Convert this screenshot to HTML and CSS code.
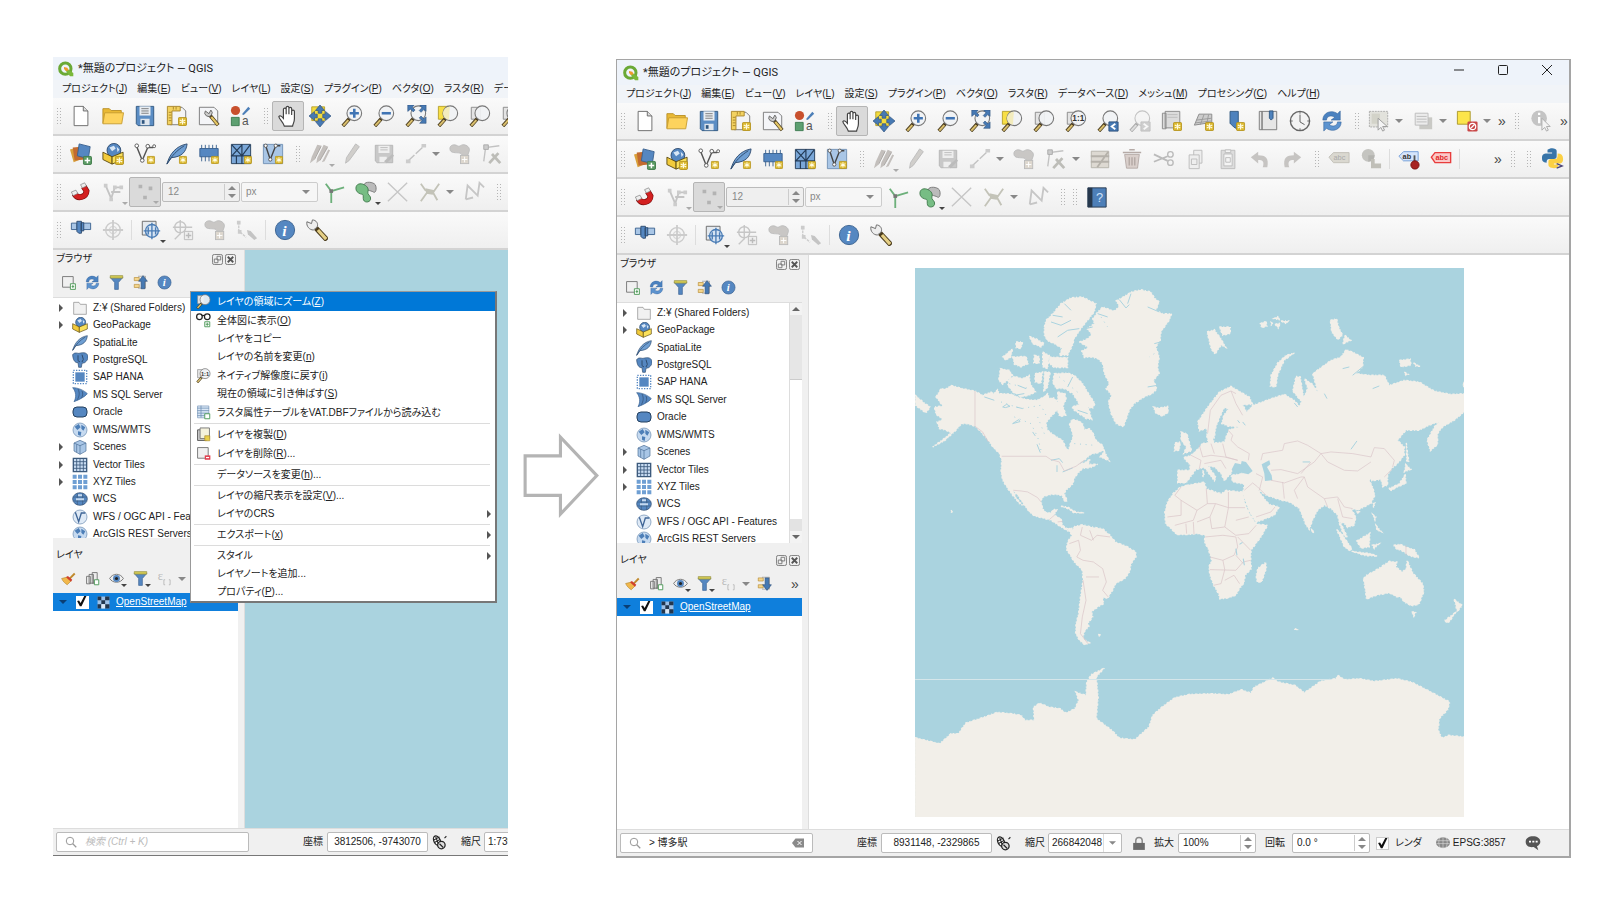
FILE: index.html
```html
<!DOCTYPE html>
<html lang="ja">

<head>
    <meta charset="UTF-8">
    <title>QGIS - レイヤの領域にズーム</title>
    <link rel="stylesheet" href="styles.css">
</head>

<body>

    <!-- icon set, all on a 24 grid -->
    <svg class="sprite">
        <symbol id="star" viewBox="0 0 10 10">
            <rect x=".5" y=".5" width="9" height="9" rx="1.5" fill="#dcb92f" stroke="#b3921d" />
            <path d="M5 1.8v6.4M2 3.4l6 3.2M8 3.4L2 6.6" stroke="#fffbe0" stroke-width="1.3" />
        </symbol>
        <symbol id="plus" viewBox="0 0 10 10">
            <rect x=".5" y=".5" width="9" height="9" rx="1.5" fill="#5a9a63" stroke="#3c7a47" />
            <path d="M5 2v6M2 5h6" stroke="#fff" stroke-width="1.6" />
        </symbol>
        <symbol id="lens" viewBox="0 0 24 24">
            <path d="M10 14l-8 9" stroke="#4a3b1c" stroke-width="4" />
            <path d="M8 16.5l-5.500 6" stroke="#d9bf6e" stroke-width="2.400" />
            <circle cx="14.500" cy="9" r="8" fill="#f0f2f4" fill-opacity=".93" stroke="#777" stroke-width="1.200" />
        </symbol>
        <symbol id="logo" viewBox="0 0 24 24">
            <circle cx="11" cy="11.500" r="8.500" fill="none" stroke="#6aa936" stroke-width="4.500" />
            <path d="M14 12l9 6v5h-5l-7-9z" fill="#7ab83a" />
            <path d="M9 9l5 1 2 4-4 1-3-3z" fill="#ee9a2c" />
        </symbol>
        <symbol id="new" viewBox="0 0 24 24">
            <path d="M4.500 1.500h10l5 5v16h-15z" fill="#fff" stroke="#666" />
            <path d="M14.500 1.500v5h5" fill="#ddd" stroke="#666" />
        </symbol>
        <symbol id="open" viewBox="0 0 24 24">
            <path d="M1 20V4h7l2 2h11v3" fill="#e9b935" stroke="#b98f25" />
            <path d="M1 20.500L3 8.500h20.500L21.500 20.500z" fill="#fdd35d" stroke="#c79c30" />
        </symbol>
        <symbol id="save" viewBox="0 0 24 24">
            <path d="M2.500 1.500h19v21h-17l-2-2z" fill="#5b8dc4" stroke="#2f567f" />
            <path d="M6 1.500h12v10H6z" fill="#e8edf2" />
            <path d="M8 4h8M8 6.500h8M8 9h8" stroke="#777" />
            <path d="M7 15h10v7H7z" fill="#dfe6ee" />
            <path d="M8.500 16.500h3v4h-3z" fill="#2f567f" />
        </symbol>
        <symbol id="layout" viewBox="0 0 24 24">
            <path d="M4.500 2.500h13l4 4v15h-17z" fill="#f4f4f4" stroke="#777" />
            <path d="M1.500 1.500h14v5h-9v15h-5z" fill="#f3d260" stroke="#a8862a" />
            <path d="M3 8h3M3 11h3M3 14h3M3 17h3M8 2v3M11 2v3" stroke="#a8862a" />
            <use href="#star" x="13" y="13" width="10" height="10" />
        </symbol>
        <symbol id="wrenchpage" viewBox="0 0 24 24">
            <path d="M1.500 2.500h16l4 4v15h-20z" fill="#f4f5f8" stroke="#777" />
            <path d="M12 10l10 12" stroke="#4a3b1c" stroke-width="4" />
            <path d="M14.500 13l7 8.500" stroke="#e5c766" stroke-width="2.400" />
            <path d="M8 6.500a4 4 0 1 0 6-1l-2 4z" fill="#ccc" stroke="#666" />
        </symbol>
        <symbol id="style" viewBox="0 0 24 24">
            <circle cx="6" cy="6" r="5" fill="#c8502d" />
            <path d="M1.500 13.500h8.500v9H1.500z" fill="#5da071" stroke="#3b7a4f" />
            <path d="M13 10l7-8 2 2-7 7z" fill="#4d7fb8" />
            <text x="13" y="22" font-size="13" fill="#555" font-family="Liberation Sans, sans-serif">a</text>
        </symbol>
        <symbol id="hand" viewBox="0 0 24 24">
            <path d="M8 23C7 19 2 15 2 12.500c1-1.500 3-.5 5 2V5c0-2 3-2 3 0v5-7c0-2 3-2 3 0v7-6c0-2 3-2 3 0v7-4c0-2 3-2 3 0v8c0 4-1.500 5-2 8z" fill="#fff" stroke="#444" stroke-width="1.300" />
        </symbol>
        <symbol id="pan" viewBox="0 0 24 24">
            <path d="M3 2h14v15H3z" fill="#f4dc3c" stroke="#b5a02c" />
            <path d="M12 0l5 6h-3v3h-4V6H7zM12 24l-5-6h3v-3h4v3h3zM0 12l6-5v3h3v4H6v3zM24 12l-6 5v-3h-3v-4h3V7z" fill="#4679b3" stroke="#2c4f7a" stroke-width=".7" />
        </symbol>
        <symbol id="zoomin" viewBox="0 0 24 24">
            <use href="#lens" />
            <path d="M14.500 4v10M9.500 9h10" stroke="#3f74b4" stroke-width="2.800" />
        </symbol>
        <symbol id="zoomout" viewBox="0 0 24 24">
            <use href="#lens" />
            <path d="M9.500 9h10" stroke="#3f74b4" stroke-width="2.800" />
        </symbol>
        <symbol id="zoomfull" viewBox="0 0 24 24">
            <use href="#lens" />
            <path d="M3 0h7L8 2.500l3 3-2 2-3-3L3 7zM23 0v7l-2.500-2-3 3-2-2 3-3L16 0zM23 20h-7l2.500-3-3-3 2-2 3 3 2.500-2z" fill="#4679b3" stroke="#2c4f7a" stroke-width=".6" />
        </symbol>
        <symbol id="zoomsel" viewBox="0 0 24 24">
            <path d="M1.500 1.500h11v14h-11z" fill="#f8df45" stroke="#b5a02c" />
            <use href="#lens" />
            <path d="M14 2a7 7 0 0 0-1 14z" fill="#f3ecbd" />
        </symbol>
        <symbol id="zoomlayer" viewBox="0 0 24 24">
            <path d="M2.500 2.500h10v13h-10z" fill="#e4e4e4" stroke="#888" />
            <use href="#lens" />
        </symbol>
        <symbol id="zoomnative" viewBox="0 0 24 24">
            <path d="M2.500 2.500h10v13h-10z" fill="#e4e4e4" stroke="#888" />
            <use href="#lens" />
            <text x="8" y="12" font-size="9" font-weight="700" fill="#333" font-family="Liberation Sans, sans-serif">1:1</text>
        </symbol>
        <symbol id="zoomlast" viewBox="0 0 24 24">
            <use href="#lens" />
            <path d="M13 13h10v10H13z" fill="#4679b3" stroke="#2c4f7a" />
            <path d="M20 15l-4 3 4 3" fill="none" stroke="#fff" stroke-width="2" />
        </symbol>
        <symbol id="zoomnext" viewBox="0 0 24 24">
            <use href="#lens" />
            <path d="M13 13h10v10H13z" fill="#999" stroke="#777" />
            <path d="M16 15l4 3-4 3" fill="none" stroke="#fff" stroke-width="2" />
        </symbol>
        <symbol id="mapview" viewBox="0 0 24 24">
            <path d="M1.500 3.500h4v17h-4zM4.500 1.500h16v18h-16z" fill="#dcdcdc" stroke="#888" />
            <path d="M7 5h11M7 8h11" stroke="#bbb" />
            <use href="#star" x="13" y="13" width="10" height="10" />
        </symbol>
        <symbol id="view3d" viewBox="0 0 24 24">
            <path d="M1.500 16.500l5-12h14v9z" fill="#ccc" stroke="#888" />
            <path d="M4 11l16-2M3 14l17-2M12 5l-4 11M17 5l-2 10" stroke="#999" />
            <use href="#star" x="13" y="13" width="10" height="10" />
        </symbol>
        <symbol id="bookmark" viewBox="0 0 24 24">
            <path d="M5.500 1.500h9v20l-5-3-4-4z" fill="#4e82bd" stroke="#2f567f" />
            <use href="#star" x="12" y="13" width="10" height="10" />
        </symbol>
        <symbol id="bookmarks" viewBox="0 0 24 24">
            <path d="M2.500 1.500h3v20h-3zM5.500 1.500h16v20h-16z" fill="#e6e6e6" stroke="#777" />
            <path d="M13.500 1h4v8l-2 2-2-2z" fill="#4e82bd" stroke="#2f567f" />
        </symbol>
        <symbol id="clock" viewBox="0 0 24 24">
            <circle cx="12" cy="12" r="10.500" fill="#f3f3f3" stroke="#666" stroke-width="1.500" />
            <path d="M12 5v8l5 3M12 2v2M12 20v2M2 12h2M20 12h2" stroke="#555" fill="none" />
        </symbol>
        <symbol id="refresh" viewBox="0 0 24 24">
            <path d="M2 11C2 3 11-1 18 4l3-3v10H11l4-3c-4-3-9-1-9 3z" fill="#4b82c0" stroke="#2f5f99" stroke-width=".6" />
            <path d="M22 13c0 8-9 12-16 7l-3 3V13h10l-4 3c4 3 9 1 9-3z" fill="#5c93cf" stroke="#2f5f99" stroke-width=".6" />
        </symbol>
        <symbol id="select" viewBox="0 0 24 24">
            <path d="M1.500 1.500h20v17h-20z" fill="#e2e2dc" stroke="#aaa" stroke-dasharray="2 1" />
            <path d="M4 4h9v11H4z" fill="#d3d3c9" />
            <path d="M11 9v13l3-3 2 4 2-1-2-4h5z" fill="#f4f4f4" stroke="#999" />
        </symbol>
        <symbol id="form" viewBox="0 0 24 24">
            <path d="M8 8h14v13H8z" fill="#c9c9c5" />
            <path d="M3.500 3.500h14v13h-14z" fill="#ececec" stroke="#bbb" />
            <path d="M5 7h11M5 10h11M5 13h11" stroke="#bbb" />
        </symbol>
        <symbol id="deselect" viewBox="0 0 24 24">
            <path d="M1.500 1.500h14v14h-14z" fill="#fce54a" stroke="#a8962a" />
            <rect x="12.500" y="12.500" width="11" height="11" rx="1.500" fill="#c94747" />
            <circle cx="18" cy="18" r="3.500" fill="none" stroke="#fff" stroke-width="1.300" />
            <path d="M15.500 20.500l5-5" stroke="#fff" stroke-width="1.300" />
        </symbol>
        <symbol id="identify" viewBox="0 0 24 24">
            <circle cx="10" cy="9" r="8.500" fill="#c4c4c4" />
            <path d="M10 3v2.500M10 7.500v7" stroke="#fff" stroke-width="2.500" />
            <path d="M13 9v13l3-3 2 4 2-1-2-4h4z" fill="#f4f4f4" stroke="#aaa" />
        </symbol>

        <symbol id="source" viewBox="0 0 24 24">
            <path d="M0 7l11-3 3 13-10 4z" fill="#d9a03a" />
            <path d="M3 5l11-1 2 14-11 1z" fill="#c26b30" />
            <path d="M10 1l12 3-2 13-12-3z" fill="#5587c1" stroke="#3a618f" />
            <use href="#plus" x="14" y="14" width="10" height="10" />
        </symbol>
        <symbol id="gpkg" viewBox="0 0 24 24">
            <circle cx="13" cy="8" r="7.500" fill="#5587c1" stroke="#2f4c6e" />
            <path d="M8 5l5-2 2 3-4 3zM16 4l3 3-2 3z" fill="#d8e6f5" />
            <path d="M1 10l10 5v8L1 18z" fill="#f2cb3b" stroke="#5c4a10" />
            <path d="M11 15l12-5v8l-12 5z" fill="#fae15c" stroke="#5c4a10" />
        </symbol>
        <symbol id="gpkgnew" viewBox="0 0 24 24">
            <use href="#gpkg" />
            <use href="#star" x="14" y="14" width="10" height="10" />
        </symbol>
        <symbol id="vnew" viewBox="0 0 24 24">
            <path d="M3 4l6 15 6-14h6" fill="none" stroke="#555" stroke-width="1.600" />
            <circle cx="3" cy="3" r="2" fill="#fff" stroke="#555" />
            <circle cx="15" cy="3.500" r="2" fill="#fff" stroke="#555" />
            <circle cx="22" cy="3.500" r="1.600" fill="#fff" stroke="#555" />
            <circle cx="9" cy="19" r="2" fill="#fff" stroke="#555" />
            <use href="#star" x="14" y="14" width="9" height="9" />
        </symbol>
        <symbol id="feather" viewBox="0 0 24 24">
            <path d="M1 23C4 12 11 3 23 1c-1 9-6 14-17 15z" fill="#6f9fd3" stroke="#2f4c6e" />
            <path d="M1 23C6 14 12 8 20 3" fill="none" stroke="#2f4c6e" />
        </symbol>
        <symbol id="feathernew" viewBox="0 0 24 24">
            <use href="#feather" />
            <use href="#star" x="14" y="14" width="9" height="9" />
        </symbol>
        <symbol id="memory" viewBox="0 0 24 24">
            <path d="M4 2v18M8 2v18M12 2v18M16 2v18M20 2v14" stroke="#3a618f" />
            <path d="M2 6h20v9H2z" fill="#5587c1" stroke="#3a618f" />
            <use href="#star" x="14" y="14" width="9" height="9" />
        </symbol>
        <symbol id="mesh" viewBox="0 0 24 24">
            <path d="M1.500 1.500h21v21h-21z" fill="#7aa7d8" stroke="#243c58" />
            <path d="M13 1v22M1 14h22M2 2l11 12M13 2L2 14M22 2l-9 12M7 14v9" stroke="#243c58" fill="none" stroke-width="1.300" />
            <use href="#star" x="15" y="14" width="9" height="9" />
        </symbol>
        <symbol id="virtual" viewBox="0 0 24 24">
            <path d="M1.500 1.500h21v21h-21z" fill="#a9c6e6" stroke="#7191b5" />
            <path d="M4 3l5 15 6-15h5" fill="none" stroke="#444" stroke-width="1.500" />
            <circle cx="4" cy="3" r="1.800" fill="#fff" stroke="#555" />
            <circle cx="15" cy="3" r="1.800" fill="#fff" stroke="#555" />
            <circle cx="9" cy="18" r="1.800" fill="#fff" stroke="#555" />
            <use href="#star" x="14" y="14" width="9" height="9" />
        </symbol>
        <symbol id="pencils" viewBox="0 0 24 24">
            <path d="M1 22l2-7L9 2l5 1-9 16zM8 22l1-6 7-14 5 2-9 15zM14 21l7-14 2 1-6 12z" fill="#c3bfbc" />
            <path d="M6 18L13 4M12 19l8-14" stroke="#aaa6a3" />
        </symbol>
        <symbol id="pencil" viewBox="0 0 24 24">
            <path d="M5 22l1-6L16 1l4 3-11 15z" fill="#d0cecb" stroke="#bbb" />
        </symbol>
        <symbol id="saveedit" viewBox="0 0 24 24">
            <path d="M2.500 2.500h19v19h-17l-2-2z" fill="#c8c8c8" stroke="#b5b5b5" />
            <path d="M6 3h12v8H6zM7 15h8v6H7z" fill="#eee" />
            <path d="M8 5h8M8 7.500h8" stroke="#bbb" />
            <path d="M12 20l9-8 2 2-8 8z" fill="#bbb" />
        </symbol>
        <symbol id="line" viewBox="0 0 24 24">
            <path d="M3 20L20 4" stroke="#c2c2c2" stroke-width="1.500" stroke-dasharray="10 2" />
            <path d="M1 18h5v4H1zM18 1h5v4h-5z" fill="#ccc" />
        </symbol>
        <symbol id="polygon" viewBox="0 0 24 24">
            <path d="M1 6C1 2 6 1 9 3s4-2 8-1 6 4 5 7-2 4-1 7-5 5-7 2 2-6-2-7-11 1-11-5z" fill="#c9c7c5" stroke="#bbb" />
            <rect x="12.500" y="13.500" width="9" height="9" fill="#ddd7ce" stroke="#bbb" />
            <path d="M17 15v6M14 18h6" stroke="#fff" />
        </symbol>
        <symbol id="vertex" viewBox="0 0 24 24">
            <path d="M3 20L5 5l15-2" fill="none" stroke="#c2c2c2" stroke-width="1.500" />
            <path d="M3 2h5v5H3z" fill="#ccc" stroke="#aaa" />
            <path d="M9 22L19 11M12 12l9 10" stroke="#bdbdb8" stroke-width="3" />
        </symbol>
        <symbol id="multiedit" viewBox="0 0 24 24">
            <path d="M2.500 3.500h19v18h-19z" fill="#ddd9d2" stroke="#b5b1aa" />
            <path d="M2 9h20M2 15h20M9 21L21 4" stroke="#b5b1aa" stroke-width="2" />
        </symbol>
        <symbol id="trash" viewBox="0 0 24 24">
            <path d="M4 7h16l-2 15H6z" fill="#d9cfcb" stroke="#b5aaa6" />
            <path d="M2 5h20M9 2h6M9 10v9M12 10v9M15 10v9" stroke="#b5aaa6" stroke-width="1.600" />
        </symbol>
        <symbol id="cut" viewBox="0 0 24 24">
            <path d="M1 7l15 7M1 15l15-6" stroke="#bbb" stroke-width="2" />
            <circle cx="19" cy="7" r="3" fill="none" stroke="#bbb" stroke-width="1.500" />
            <circle cx="19" cy="16" r="3" fill="none" stroke="#bbb" stroke-width="1.500" />
        </symbol>
        <symbol id="copy" viewBox="0 0 24 24">
            <path d="M9.500 2.500h9v14h-9z" fill="#eee" stroke="#bbb" />
            <path d="M4.500 7.500h11v15h-11z" fill="#eee" stroke="#bbb" />
            <path d="M7 12h6v6H7z" fill="none" stroke="#bbb" />
        </symbol>
        <symbol id="paste" viewBox="0 0 24 24">
            <path d="M4.500 2.500h15v20h-15z" fill="#ddd" stroke="#bbb" />
            <path d="M7.500 6.500h9v13h-9zM9 2h6v3H9zM9.500 10.500h5v5h-5z" fill="#f4f4f4" stroke="#bbb" />
        </symbol>
        <symbol id="undo" viewBox="0 0 24 24">
            <path d="M2 10l8-6v4c8 0 12 3 10 13h-5c2-6 0-8-5-8v4z" fill="#c6c4c2" />
        </symbol>
        <symbol id="redo" viewBox="0 0 24 24">
            <path d="M22 10l-8-6v4C6 8 2 11 4 21h5c-2-6 0-8 5-8v4z" fill="#c6c4c2" />
        </symbol>
        <symbol id="label" viewBox="0 0 24 24">
            <path d="M1 10l5-5h17v11H6z" fill="#dad8d0" stroke="#c2c0b8" />
            <text x="6" y="13" font-size="8" fill="#aaa" font-family="Liberation Sans, sans-serif">abc</text>
        </symbol>
        <symbol id="diagram" viewBox="0 0 24 24">
            <circle cx="9" cy="8" r="7" fill="#c4c4c0" />
            <path d="M9 8h7a7 7 0 0 1-7 7z" fill="#b4b4b0" />
            <path d="M12 12h4v10h-4zM16 17h7v5h-7z" fill="#c0bfb8" />
        </symbol>
        <symbol id="pinlabel" viewBox="0 0 24 24">
            <path d="M1 9l5-5h16v10H6z" fill="#d5e4fb" stroke="#6f9bd8" />
            <text x="5" y="12" font-size="8" font-weight="700" fill="#333" font-family="Liberation Sans, sans-serif">ab</text>
            <path d="M18 8v8" stroke="#555" stroke-width="2" />
            <circle cx="18.500" cy="18.500" r="4.500" fill="#a82424" stroke="#7a1515" />
        </symbol>
        <symbol id="redlabel" viewBox="0 0 24 24">
            <path d="M1.500 10l4-5h17v11h-17z" fill="#fbc9c9" stroke="#e83d3d" stroke-width="1.500" />
            <text x="6" y="13" font-size="8" font-weight="700" fill="#e02a2a" font-family="Liberation Sans, sans-serif">abc</text>
        </symbol>
        <symbol id="python" viewBox="0 0 24 24">
            <path d="M6 2c3-3 10-2 10 1v6c0 2-1 3-3 3H8c-2 0-3 1-3 4-4 0-5-2-5-5 0-4 2-5 5-5h6V5H6z" fill="#3774a8" />
            <path d="M17 6c4 0 6 2 6 6s-2 5-5 5h-5v1h5c0 3-2 4-5 4s-6-1-6-4v-3c0-2 1-3 3-3h4c3 0 3-2 3-6z" fill="#fbd044" />
            <path d="M16 17l6 2.500-6 2.500" fill="none" stroke="#4b4478" stroke-width="1.500" />
        </symbol>

        <symbol id="magnet" viewBox="0 0 24 24">
            <path d="M5 14c3 6 13 4 13-3l-3-5" fill="none" stroke="#7d1010" stroke-width="6.500" />
            <path d="M5 14c3 6 13 4 13-3l-3-5" fill="none" stroke="#d32020" stroke-width="5" />
            <path d="M1.500 12l5-2 2 3.500-5 2.500zM11.500 4l4.500-2 2 3.500-4.500 2z" fill="#eee" stroke="#777" stroke-width=".7" />
        </symbol>
        <symbol id="snapv" viewBox="0 0 24 24">
            <path d="M4 5l6 14 4-12h8M10 12h10" fill="none" stroke="#c4c4c4" stroke-width="2" />
            <path d="M2 3h4v4H2zM8 18h4v4H8zM12 5h4v4h-4zM19 5h4v4h-4z" fill="#ccc" />
        </symbol>
        <symbol id="dots" viewBox="0 0 24 24">
            <path d="M5 4h4v4H5zM16 6h4v4h-4zM10 16h4v4h-4z" fill="#b3b3b3" />
        </symbol>
        <symbol id="topo" viewBox="0 0 24 24">
            <path d="M3 3l6 8 14-4M9 11v13" stroke="#6db07b" stroke-width="2" fill="none" />
            <path d="M7 9h4v4H7z" fill="#777" />
        </symbol>
        <symbol id="overlap" viewBox="0 0 24 24">
            <path d="M10 4c1-4 10-3 12 0s1 10-2 8-9-1-10-8z" fill="#bbb" stroke="#777" />
            <path d="M1 8c0-5 5-6 9-4s5 5 4 8 4 4 3 8-8 4-8-1 0-4-3-5-5-3-5-6z" fill="#77bd84" stroke="#3f7a4c" />
        </symbol>
        <symbol id="cross" viewBox="0 0 24 24">
            <path d="M1 2l21 20M22 2L1 22" stroke="#c6c6c6" stroke-width="1.500" />
        </symbol>
        <symbol id="trace" viewBox="0 0 24 24">
            <path d="M2 3l5 7 8 3 7-10M2 22l8-11M15 12l5 9" stroke="#c3c3b8" stroke-width="2" fill="none" />
            <path d="M7 8l10 2-2 5-7-1z" fill="#c3c3b8" />
        </symbol>
        <symbol id="selfsnap" viewBox="0 0 24 24">
            <path d="M3 20l2-15 11 11 2-14 5 5M3 20l8-2" stroke="#c6c6c6" stroke-width="2" fill="none" />
        </symbol>
        <symbol id="help" viewBox="0 0 24 24">
            <path d="M2 2h20v21H2z" fill="#4d7fb8" stroke="#26384d" />
            <path d="M2 2h5v21H2z" fill="#26384d" />
            <text x="11" y="17" font-size="14" fill="#cfe2f8" font-family="Liberation Sans, sans-serif">?</text>
        </symbol>

        <symbol id="digit" viewBox="0 0 24 24">
            <path d="M1.500 4.500h6v7h-6zM14 4.500h8.500v7H14z" fill="#a9c6e6" stroke="#3a618f" />
            <path d="M7.500 2.500h5v13h-3l-2-2zM12 4h3v9h-3z" fill="#5587c1" stroke="#2f4c6e" />
        </symbol>
        <symbol id="target" viewBox="0 0 24 24">
            <circle cx="12" cy="12" r="8" fill="none" stroke="#ccc" stroke-width="1.500" />
            <circle cx="12" cy="12" r="4" fill="none" stroke="#ccc" />
            <path d="M12 1v22M1 12h22" stroke="#ccc" stroke-width="2" />
        </symbol>
        <symbol id="targetblue" viewBox="0 0 24 24">
            <path d="M2.500 2.500h15v15h-15z" fill="#e4e9ee" stroke="#666" />
            <circle cx="13" cy="13" r="7" fill="#d6e4f3" stroke="#4a7cb5" stroke-width="1.500" />
            <path d="M13 4v18M4 13h18M9 9v8M17 9v8" stroke="#4a7cb5" stroke-width="1.500" />
        </symbol>
        <symbol id="addpart" viewBox="0 0 24 24">
            <circle cx="9" cy="9" r="6" fill="none" stroke="#c6c6c6" stroke-width="1.500" />
            <path d="M9 1v16M1 9h21M3 22l6-6" stroke="#c6c6c6" stroke-width="1.500" />
            <path d="M13.500 13.500h9v9h-9z" fill="#eee" stroke="#bbb" />
            <path d="M18 15v6M15 18h6" stroke="#bbb" stroke-width="1.500" />
        </symbol>
        <symbol id="move" viewBox="0 0 24 24">
            <path d="M3 3v10l8 7" stroke="#ccc" stroke-width="1.500" stroke-dasharray="3 1" fill="none" />
            <path d="M1 2h4v4H1zM2 12h4v4H2z" fill="#ccc" />
            <path d="M12 12l4 1 7 8-3 2-7-6z" fill="#c4c4c4" />
        </symbol>
        <symbol id="info" viewBox="0 0 24 24">
            <circle cx="12" cy="12" r="10.500" fill="#5587c1" stroke="#3a618f" />
            <text x="9" y="18" font-size="17" font-style="italic" font-weight="700" fill="#fff" font-family="Liberation Serif, serif">i</text>
        </symbol>
        <symbol id="wrench" viewBox="0 0 24 24">
            <path d="M11 10l12 13" stroke="#4a3b1c" stroke-width="5.500" />
            <path d="M13 12l9 10" stroke="#e5cf85" stroke-width="3.500" />
            <path d="M1 3l5 2 1-4c4 0 7 4 5 8l-4 3C4 12 0 8 1 3z" fill="#eee" stroke="#666" />
        </symbol>

        <symbol id="addbox" viewBox="0 0 24 24">
            <path d="M2.500 2.500h17v17h-17z" fill="#f0f0f0" stroke="#777" stroke-width="1.500" />
            <path d="M15 14h8v9h-8z" fill="#fff" stroke="#4f9a5a" stroke-width="1.500" />
            <path d="M19 16v5M17 18.500h4" stroke="#4f9a5a" stroke-width="1.500" />
        </symbol>
        <symbol id="filter" viewBox="0 0 24 24">
            <path d="M2 4h20l-7 8v11H9V12z" fill="#5587c1" stroke="#3a618f" />
            <path d="M2 1h20v4H2z" fill="#d3cb55" stroke="#8e8838" />
        </symbol>
        <symbol id="collapse" viewBox="0 0 24 24">
            <path d="M2 4h8v5H2zM2 15h8v5H2z" fill="#f3d58c" stroke="#b3862e" />
            <path d="M8 2h12v19H8" stroke="#888" fill="none" />
            <path d="M16 1l7 9h-4v12h-6V10H9z" fill="#4679b3" stroke="#2c4f7a" />
        </symbol>
        <symbol id="expand" viewBox="0 0 24 24">
            <path d="M2 3h8v5H2zM2 14h8v5H2z" fill="#f3d58c" stroke="#b3862e" />
            <path d="M8 2h12v19H8" stroke="#888" fill="none" />
            <path d="M16 23l7-9h-4V3h-6v11H9z" fill="#4679b3" stroke="#2c4f7a" />
        </symbol>
        <symbol id="brush" viewBox="0 0 24 24">
            <path d="M13 13L22 4" stroke="#c08a2d" stroke-width="3" />
            <path d="M1 12l8-2 7 6-6 6C7 20 3 17 1 12z" fill="#f2b84b" stroke="#b3862e" />
            <path d="M8 10l3-2 7 6-2 3z" fill="#d0402d" />
        </symbol>
        <symbol id="group" viewBox="0 0 24 24">
            <path d="M2.500 8.500h6v12h-6zM6.500 5.500h7v14h-7zM11.500 2.500h8v17h-8z" fill="#ececec" stroke="#777" stroke-width="1.500" />
            <path d="M15 14h7v8h-7z" fill="#fff" stroke="#4f9a5a" stroke-width="1.500" />
        </symbol>
        <symbol id="eye" viewBox="0 0 24 24">
            <path d="M1 12c5-9 17-9 22 0-5 8-17 8-22 0z" fill="#eee" stroke="#777" stroke-width="1.500" />
            <circle cx="12" cy="12" r="5.500" fill="#5587c1" />
            <circle cx="12" cy="12" r="2.500" fill="#222" />
        </symbol>
        <symbol id="epsilon" viewBox="0 0 24 24">
            <text x="1" y="14" font-size="20" fill="#bbb" font-family="Liberation Serif, serif">ε</text>
            <path d="M13 14h-2v8h2M19 14h2v8h-2" stroke="#bbb" fill="none" stroke-width="1.500" />
        </symbol>
        <symbol id="folder" viewBox="0 0 24 24">
            <path d="M2.500 21.500v-18h8l2 3h9v15z" fill="#f1f1f1" stroke="#888" />
        </symbol>
        <symbol id="postgres" viewBox="0 0 24 24">
            <path d="M1 4c3-4 7-2 9-2s10-3 13 2-1 10-4 12l-4 1-1 6h-4l-1-7c-5 1-8-6-8-12z" fill="#5587c1" stroke="#2f4c6e" />
            <path d="M9 5v8l3 2M15 4l2 7-2 4" stroke="#2f4c6e" fill="none" stroke-width="1.500" />
        </symbol>
        <symbol id="hana" viewBox="0 0 24 24">
            <path d="M5 5h14v14H5z" fill="#5587c1" />
            <path d="M2 2h20v20H2z" fill="none" stroke="#5587c1" stroke-width="2" stroke-dasharray="2 2" />
        </symbol>
        <symbol id="mssql" viewBox="0 0 24 24">
            <path d="M1 1c8 0 17 4 22 9-4 5-12 9-20 12 4-7 3-15-2-21z" fill="#5587c1" stroke="#3a618f" />
            <path d="M9 3c3 6 2 11-1 16M15 6c2 4 1 8-1 10" stroke="#2f4c6e" fill="none" />
        </symbol>
        <symbol id="oracle" viewBox="0 0 24 24">
            <rect x="1.500" y="4.500" width="21" height="15" rx="6" fill="#5587c1" stroke="#24405f" stroke-width="1.500" />
        </symbol>
        <symbol id="globe" viewBox="0 0 24 24">
            <circle cx="12" cy="12" r="10.500" fill="#c6daf0" stroke="#6788ae" />
            <path d="M4 7l6-4 3 5-5 4zM14 4l6 4-3 5-3-3zM9 14l5 1-1 6-4-2z" fill="#4d7fb8" />
        </symbol>
        <symbol id="cube" viewBox="0 0 24 24">
            <path d="M3 6l9-4 9 4v12l-9 5-9-5z" fill="#a9c6e6" stroke="#4a6d96" />
            <path d="M3 6l9 4 9-4M12 10v13M7 8v12" fill="none" stroke="#4a6d96" />
        </symbol>
        <symbol id="grid" viewBox="0 0 24 24">
            <path d="M2 2h20v20H2z" fill="#c8dcf2" stroke="#3d5b7d" stroke-width="2" />
            <path d="M7 2v20M12 2v20M17 2v20M2 7h20M2 12h20M2 17h20" stroke="#3d5b7d" stroke-width="1.300" />
        </symbol>
        <symbol id="xyz" viewBox="0 0 24 24">
            <path d="M1 1h6v6H1zM9 1h6v6H9zM17 1h6v6h-6zM1 9h6v6H1zM9 9h6v6H9zM17 9h6v6h-6zM1 17h6v6H1zM9 17h6v6H9zM17 17h6v6h-6z" fill="#6f9fd3" />
        </symbol>
        <symbol id="wcs" viewBox="0 0 24 24">
            <ellipse cx="12" cy="12" rx="11" ry="9.500" fill="#5587c1" stroke="#2f4c6e" />
            <path d="M2 9h20M2 15h20M8 3v18M16 3v18" stroke="#3d5b7d" />
            <path d="M9 5h6v3H9zM6 11h12v3H6z" fill="#c6daf0" />
        </symbol>
        <symbol id="wfs" viewBox="0 0 24 24">
            <circle cx="12" cy="12" r="10.500" fill="#dfeaf6" stroke="#6788ae" />
            <path d="M5 5l5 14 4-13h6" fill="none" stroke="#3f6596" stroke-width="2" />
        </symbol>
        <symbol id="raster" viewBox="0 0 24 24">
            <path d="M1 1h22v22H1z" fill="#9dc0e6" />
            <path d="M1 1h7v7H1zM15 1h8v7h-8zM8 8h7v7H8zM1 15h7v8H1zM15 15h8v8h-8z" fill="#23364d" />
            <path d="M8 15h7v8H8z" fill="#dde9f5" />
        </symbol>
        <symbol id="glasses" viewBox="0 0 24 24">
            <circle cx="5.500" cy="6" r="4.500" fill="#fff" stroke="#222" stroke-width="2" />
            <circle cx="18" cy="6" r="4.500" fill="#fff" stroke="#222" stroke-width="2" />
            <path d="M9 4h5" stroke="#222" stroke-width="2" />
            <path d="M14 14h8v8h-8z" fill="#fff" stroke="#4f9a5a" stroke-width="1.500" />
            <path d="M18 15.500v5M15.500 18h5" stroke="#4f9a5a" stroke-width="1.500" />
        </symbol>
        <symbol id="table" viewBox="0 0 24 24">
            <path d="M2.500 1.500h18v19h-18z" fill="#dbe8f6" stroke="#7191b5" />
            <path d="M2 5h19M2 9h19M2 13h19M2 17h19M8 1v19" stroke="#7191b5" stroke-width="1.300" />
            <path d="M14 14h8v8h-8z" fill="#fff" stroke="#4f9a5a" stroke-width="1.500" />
        </symbol>
        <symbol id="dup" viewBox="0 0 24 24">
            <path d="M2.500 4.500h14v17h-14z" fill="#ccc" stroke="#555" stroke-width="1.500" />
            <path d="M6.500 1.500h15v17h-15z" fill="#f5f2dc" stroke="#777" stroke-width="1.500" />
            <path d="M14 14h8v8h-8z" fill="#e9cf4a" stroke="#a8862a" />
        </symbol>
        <symbol id="remove" viewBox="0 0 24 24">
            <path d="M2.500 2.500h17v17h-17z" fill="#f0f0f0" stroke="#777" stroke-width="1.500" />
            <path d="M14 15h9v7h-9z" fill="#e03c4c" />
            <path d="M16 18.500h5" stroke="#fff" stroke-width="2" />
        </symbol>
        <symbol id="search" viewBox="0 0 24 24">
            <circle cx="10" cy="10" r="7.500" fill="none" stroke="#999" stroke-width="2" />
            <path d="M15.500 15.500l7 7" stroke="#999" stroke-width="2.500" />
        </symbol>
        <symbol id="clear" viewBox="0 0 24 24">
            <path d="M0 12l7-9h17v18H7z" fill="#8a8a8a" />
            <path d="M11 8l8 8M19 8l-8 8" stroke="#fff" stroke-width="2" />
        </symbol>
        <symbol id="mouse" viewBox="0 0 24 24">
            <ellipse cx="8" cy="9" rx="5" ry="8" fill="#fff" stroke="#222" stroke-width="2" transform="rotate(-25 8 9)" />
            <ellipse cx="15" cy="16" rx="6" ry="6" fill="#ddd" stroke="#222" stroke-width="2" />
            <path d="M6 3l4 11M3 8l9-5M4 12l9-5M12 14l6 6M20 5l3-3" stroke="#222" stroke-width="1.700" />
        </symbol>
        <symbol id="lock" viewBox="0 0 24 24">
            <path d="M6.500 12V7c0-7 11-7 11 0v5" fill="none" stroke="#888" stroke-width="2.500" />
            <path d="M2 11h20v12H2z" fill="#6a6a6a" />
        </symbol>
        <symbol id="crs" viewBox="0 0 24 24">
            <ellipse cx="12" cy="11" rx="12" ry="9" fill="#888" />
            <path d="M1 8h22M1 13h22M7 2c-3 6-3 12 0 18M17 2c3 6 3 12 0 18M12 2v20" stroke="#ddd" fill="none" />
        </symbol>
        <symbol id="bubble" viewBox="0 0 24 24">
            <path d="M12 2c6 0 11 3 11 8 0 3-2 5-5 7l2 6-7-5C6 19 1 16 1 10c0-5 5-8 11-8z" fill="#555" />
            <path d="M6 10h3M11 10h3M16 10h3" stroke="#fff" stroke-width="2.500" />
        </symbol>
        <symbol id="float" viewBox="0 0 12 12">
            <rect x=".5" y=".5" width="11" height="11" rx="2" fill="none" stroke="#777" />
            <path d="M5.500 2.500h4v4h-4zM2.500 5.500h4v4h-4z" fill="#f0f0f0" stroke="#777" />
        </symbol>
        <symbol id="close" viewBox="0 0 12 12">
            <rect x=".5" y=".5" width="11" height="11" rx="2" fill="none" stroke="#777" />
            <path d="M3 3l6 6M9 3L3 9" stroke="#555" stroke-width="2" />
        </symbol>
        <symbol id="down" viewBox="0 0 8 8">
            <path d="M0 2h8L4 6z" fill="#888" />
        </symbol>
        <symbol id="downdark" viewBox="0 0 8 8">
            <path d="M0 2h8L4 6z" fill="#0a3f75" />
        </symbol>
        <symbol id="spin" viewBox="0 0 8 16">
            <path d="M0 6h8L4 2zM0 10h8l-4 4z" fill="#888" />
        </symbol>
    </svg>

    <!-- before: context menu on the layer -->
    <section class="window before">
        <header class="titlebar">
            <svg class="logo"><use href="#logo" /></svg>
            <h1>*無題のプロジェクト — QGIS</h1>
        </header>
        <nav class="menubar">
            <button>プロジェクト(<u>J</u>)</button>
            <button>編集(<u>E</u>)</button>
            <button>ビュー(<u>V</u>)</button>
            <button>レイヤ(<u>L</u>)</button>
            <button>設定(<u>S</u>)</button>
            <button>プラグイン(<u>P</u>)</button>
            <button>ベクタ(<u>O</u>)</button>
            <button>ラスタ(<u>R</u>)</button>
            <button>データベース(<u>D</u>)</button>
        </nav>
        <div class="toolbar">
            <i class="grip"></i>
            <button class="tool"><svg><use href="#new" /></svg></button>
            <button class="tool"><svg><use href="#open" /></svg></button>
            <button class="tool"><svg><use href="#save" /></svg></button>
            <button class="tool"><svg><use href="#layout" /></svg></button>
            <button class="tool"><svg><use href="#wrenchpage" /></svg></button>
            <button class="tool"><svg><use href="#style" /></svg></button>
            <i class="grip"></i>
            <button class="tool active"><svg><use href="#hand" /></svg></button>
            <button class="tool"><svg><use href="#pan" /></svg></button>
            <button class="tool"><svg><use href="#zoomin" /></svg></button>
            <button class="tool"><svg><use href="#zoomout" /></svg></button>
            <button class="tool"><svg><use href="#zoomfull" /></svg></button>
            <button class="tool"><svg><use href="#zoomsel" /></svg></button>
            <button class="tool"><svg><use href="#zoomlayer" /></svg></button>
            <button class="tool"><svg><use href="#zoomnative" /></svg></button>
        </div>
        <div class="toolbar">
            <i class="grip"></i>
            <button class="tool"><svg><use href="#source" /></svg></button>
            <button class="tool"><svg><use href="#gpkgnew" /></svg></button>
            <button class="tool"><svg><use href="#vnew" /></svg></button>
            <button class="tool"><svg><use href="#feathernew" /></svg></button>
            <button class="tool"><svg><use href="#memory" /></svg></button>
            <button class="tool"><svg><use href="#mesh" /></svg></button>
            <button class="tool"><svg><use href="#virtual" /></svg></button>
            <i class="grip"></i>
            <button class="tool more"><svg><use href="#pencils" /></svg></button>
            <button class="tool"><svg><use href="#pencil" /></svg></button>
            <button class="tool"><svg><use href="#saveedit" /></svg></button>
            <button class="tool"><svg><use href="#line" /></svg></button>
            <button class="drop"><svg><use href="#down" /></svg></button>
            <button class="tool"><svg><use href="#polygon" /></svg></button>
            <button class="tool"><svg><use href="#vertex" /></svg></button>
        </div>
        <div class="toolbar">
            <i class="grip"></i>
            <button class="tool"><svg><use href="#magnet" /></svg></button>
            <button class="tool more"><svg><use href="#snapv" /></svg></button>
            <button class="tool active more"><svg><use href="#dots" /></svg></button>
            <span class="field tolerance"><input type="text" value="12" aria-label="許容範囲"><svg class="spin"><use href="#spin" /></svg></span>
            <span class="field unit"><select aria-label="単位"><option>px</option></select><svg class="arrow"><use href="#down" /></svg></span>
            <button class="tool"><svg><use href="#topo" /></svg></button>
            <button class="tool more dark"><svg><use href="#overlap" /></svg></button>
            <button class="tool"><svg><use href="#cross" /></svg></button>
            <button class="tool"><svg><use href="#trace" /></svg></button>
            <button class="drop"><svg><use href="#down" /></svg></button>
            <button class="tool"><svg><use href="#selfsnap" /></svg></button>
            <i class="grip"></i>
        </div>
        <div class="toolbar">
            <i class="grip"></i>
            <button class="tool"><svg><use href="#digit" /></svg></button>
            <button class="tool"><svg><use href="#target" /></svg></button>
            <i class="sep"></i>
            <button class="tool more dark"><svg><use href="#targetblue" /></svg></button>
            <button class="tool"><svg><use href="#addpart" /></svg></button>
            <button class="tool"><svg><use href="#polygon" /></svg></button>
            <button class="tool"><svg><use href="#move" /></svg></button>
            <i class="sep"></i>
            <button class="tool"><svg><use href="#info" /></svg></button>
            <button class="tool"><svg><use href="#wrench" /></svg></button>
        </div>

        <div class="work">
            <aside class="docks">
                <div class="dock-title">
                    <h2>ブラウザ</h2>
                    <button><svg><use href="#float" /></svg></button>
                    <button><svg><use href="#close" /></svg></button>
                </div>
                <div class="dock-tools">
                    <button><svg><use href="#addbox" /></svg></button>
                    <button><svg><use href="#refresh" /></svg></button>
                    <button><svg><use href="#filter" /></svg></button>
                    <button><svg><use href="#collapse" /></svg></button>
                    <button><svg><use href="#info" /></svg></button>
                </div>
                <div class="browser">
                    <ul class="tree">
                        <li class="parent"><svg><use href="#folder" /></svg>Z:¥ (Shared Folders)</li>
                        <li class="parent"><svg><use href="#gpkg" /></svg>GeoPackage</li>
                        <li><svg><use href="#feather" /></svg>SpatiaLite</li>
                        <li><svg><use href="#postgres" /></svg>PostgreSQL</li>
                        <li><svg><use href="#hana" /></svg>SAP HANA</li>
                        <li><svg><use href="#mssql" /></svg>MS SQL Server</li>
                        <li><svg><use href="#oracle" /></svg>Oracle</li>
                        <li><svg><use href="#globe" /></svg>WMS/WMTS</li>
                        <li class="parent"><svg><use href="#cube" /></svg>Scenes</li>
                        <li class="parent"><svg><use href="#grid" /></svg>Vector Tiles</li>
                        <li class="parent"><svg><use href="#xyz" /></svg>XYZ Tiles</li>
                        <li><svg><use href="#wcs" /></svg>WCS</li>
                        <li><svg><use href="#wfs" /></svg>WFS / OGC API - Features</li>
                        <li><svg><use href="#globe" /></svg>ArcGIS REST Servers</li>
                    </ul>
                </div>
                <div class="dock-title second">
                    <h2>レイヤ</h2>
                </div>
                <div class="dock-tools">
                    <button><svg><use href="#brush" /></svg></button>
                    <button><svg><use href="#group" /></svg></button>
                    <button class="more dark"><svg><use href="#eye" /></svg></button>
                    <button class="more dark"><svg><use href="#filter" /></svg></button>
                    <button><svg><use href="#epsilon" /></svg></button>
                    <button class="drop"><svg><use href="#down" /></svg></button>
                </div>
                <div class="layers">
                    <div class="layer">
                        <svg class="open"><use href="#downdark" /></svg>
                        <input type="checkbox" id="osm1" checked>
                        <svg class="kind"><use href="#raster" /></svg>
                        <label for="osm1">OpenStreetMap</label>
                    </div>
                </div>
            </aside>
            <main class="canvas sea"></main>
        </div>

        <footer class="status">
            <span class="field find"><svg><use href="#search" /></svg><input type="text" placeholder="検索 (Ctrl + K)" aria-label="検索"></span>
            <label class="coord-label" for="coord1">座標</label>
            <span class="field coord"><input type="text" id="coord1" value="3812506, -9743070"></span>
            <svg class="mouse"><use href="#mouse" /></svg>
            <label for="scale1">縮尺</label>
            <span class="field scale"><select id="scale1"><option>1:73958871</option></select></span>
        </footer>

        <div class="popup">
            <button class="pic current"><svg><use href="#zoomlayer" /></svg><span>レイヤの領域にズーム(<u>Z</u>)</span></button>
            <button class="pic"><svg><use href="#glasses" /></svg><span>全体図に表示(<u>O</u>)</span></button>
            <button><span>レイヤをコピー</span></button>
            <button><span>レイヤの名前を変更(<u>n</u>)</span></button>
            <button class="pic"><svg><use href="#zoomnative" /></svg><span>ネイティブ解像度に戻す(<u>i</u>)</span></button>
            <button><span>現在の領域に引き伸ばす(<u>S</u>)</span></button>
            <button class="pic"><svg><use href="#table" /></svg><span>ラスタ属性テーブルをVAT.DBFファイルから読み込む</span></button>
            <hr>
            <button class="pic"><svg><use href="#dup" /></svg><span>レイヤを複製(<u>D</u>)</span></button>
            <button class="pic"><svg><use href="#remove" /></svg><span>レイヤを削除(<u>R</u>)...</span></button>
            <hr>
            <button><span>データソースを変更(<u>h</u>)...</span></button>
            <hr>
            <button><span>レイヤの縮尺表示を設定(<u>V</u>)...</span></button>
            <button class="sub"><span>レイヤのCRS</span></button>
            <hr>
            <button class="sub"><span>エクスポート(<u>x</u>)</span></button>
            <hr>
            <button class="sub"><span>スタイル</span></button>
            <button><span>レイヤノートを追加...</span></button>
            <button><span>プロパティ(<u>P</u>)...</span></button>
        </div>
    </section>

    <svg class="next" viewBox="0 0 76 82">
        <path d="M3 22h34V4l35 37-35 37V60H3z" fill="#fff" stroke="#b4b4b4" stroke-width="3" />
    </svg>

    <!-- after: whole world in the canvas -->
    <section class="window after">
        <header class="titlebar">
            <svg class="logo"><use href="#logo" /></svg>
            <h1>*無題のプロジェクト — QGIS</h1>
            <button class="winbtn"><svg viewBox="0 0 12 12"><path d="M1 6h10" /></svg></button>
            <button class="winbtn"><svg viewBox="0 0 12 12"><rect x="1.500" y="1.500" width="9" height="9" rx="1" /></svg></button>
            <button class="winbtn"><svg viewBox="0 0 12 12"><path d="M1 1l10 10M11 1L1 11" /></svg></button>
        </header>
        <nav class="menubar">
            <button>プロジェクト(<u>J</u>)</button>
            <button>編集(<u>E</u>)</button>
            <button>ビュー(<u>V</u>)</button>
            <button>レイヤ(<u>L</u>)</button>
            <button>設定(<u>S</u>)</button>
            <button>プラグイン(<u>P</u>)</button>
            <button>ベクタ(<u>O</u>)</button>
            <button>ラスタ(<u>R</u>)</button>
            <button>データベース(<u>D</u>)</button>
            <button>メッシュ(<u>M</u>)</button>
            <button>プロセシング(<u>C</u>)</button>
            <button>ヘルプ(<u>H</u>)</button>
        </nav>
        <div class="toolbar">
            <i class="grip"></i>
            <button class="tool"><svg><use href="#new" /></svg></button>
            <button class="tool"><svg><use href="#open" /></svg></button>
            <button class="tool"><svg><use href="#save" /></svg></button>
            <button class="tool"><svg><use href="#layout" /></svg></button>
            <button class="tool"><svg><use href="#wrenchpage" /></svg></button>
            <button class="tool"><svg><use href="#style" /></svg></button>
            <i class="grip"></i>
            <button class="tool active"><svg><use href="#hand" /></svg></button>
            <button class="tool"><svg><use href="#pan" /></svg></button>
            <button class="tool"><svg><use href="#zoomin" /></svg></button>
            <button class="tool"><svg><use href="#zoomout" /></svg></button>
            <button class="tool"><svg><use href="#zoomfull" /></svg></button>
            <button class="tool"><svg><use href="#zoomsel" /></svg></button>
            <button class="tool"><svg><use href="#zoomlayer" /></svg></button>
            <button class="tool"><svg><use href="#zoomnative" /></svg></button>
            <button class="tool"><svg><use href="#zoomlast" /></svg></button>
            <button class="tool off"><svg><use href="#zoomnext" /></svg></button>
            <button class="tool"><svg><use href="#mapview" /></svg></button>
            <button class="tool"><svg><use href="#view3d" /></svg></button>
            <button class="tool"><svg><use href="#bookmark" /></svg></button>
            <button class="tool"><svg><use href="#bookmarks" /></svg></button>
            <button class="tool"><svg><use href="#clock" /></svg></button>
            <button class="tool"><svg><use href="#refresh" /></svg></button>
            <i class="grip"></i>
            <button class="tool"><svg><use href="#select" /></svg></button>
            <button class="drop"><svg><use href="#down" /></svg></button>
            <button class="tool"><svg><use href="#form" /></svg></button>
            <button class="drop"><svg><use href="#down" /></svg></button>
            <button class="tool"><svg><use href="#deselect" /></svg></button>
            <button class="drop"><svg><use href="#down" /></svg></button>
            <span class="rest">
                <button class="ext">»</button>
                <i class="grip"></i>
                <button class="tool"><svg><use href="#identify" /></svg></button>
                <button class="ext">»</button>
            </span>
        </div>
        <div class="toolbar">
            <i class="grip"></i>
            <button class="tool"><svg><use href="#source" /></svg></button>
            <button class="tool"><svg><use href="#gpkgnew" /></svg></button>
            <button class="tool"><svg><use href="#vnew" /></svg></button>
            <button class="tool"><svg><use href="#feathernew" /></svg></button>
            <button class="tool"><svg><use href="#memory" /></svg></button>
            <button class="tool"><svg><use href="#mesh" /></svg></button>
            <button class="tool"><svg><use href="#virtual" /></svg></button>
            <i class="grip"></i>
            <button class="tool more"><svg><use href="#pencils" /></svg></button>
            <button class="tool"><svg><use href="#pencil" /></svg></button>
            <button class="tool"><svg><use href="#saveedit" /></svg></button>
            <button class="tool"><svg><use href="#line" /></svg></button>
            <button class="drop"><svg><use href="#down" /></svg></button>
            <button class="tool"><svg><use href="#polygon" /></svg></button>
            <button class="tool"><svg><use href="#vertex" /></svg></button>
            <button class="drop"><svg><use href="#down" /></svg></button>
            <button class="tool"><svg><use href="#multiedit" /></svg></button>
            <button class="tool"><svg><use href="#trash" /></svg></button>
            <button class="tool"><svg><use href="#cut" /></svg></button>
            <button class="tool"><svg><use href="#copy" /></svg></button>
            <button class="tool"><svg><use href="#paste" /></svg></button>
            <button class="tool"><svg><use href="#undo" /></svg></button>
            <button class="tool"><svg><use href="#redo" /></svg></button>
            <i class="grip"></i>
            <button class="tool"><svg><use href="#label" /></svg></button>
            <button class="tool"><svg><use href="#diagram" /></svg></button>
            <i class="sep"></i>
            <button class="tool"><svg><use href="#pinlabel" /></svg></button>
            <button class="tool"><svg><use href="#redlabel" /></svg></button>
            <i class="sep"></i>
            <span class="rest">
                <button class="ext">»</button>
                <i class="grip"></i>
                <i class="grip"></i>
                <button class="tool"><svg><use href="#python" /></svg></button>
            </span>
        </div>
        <div class="toolbar">
            <i class="grip"></i>
            <button class="tool"><svg><use href="#magnet" /></svg></button>
            <button class="tool more"><svg><use href="#snapv" /></svg></button>
            <button class="tool active more"><svg><use href="#dots" /></svg></button>
            <span class="field tolerance"><input type="text" value="12" aria-label="許容範囲"><svg class="spin"><use href="#spin" /></svg></span>
            <span class="field unit"><select aria-label="単位"><option>px</option></select><svg class="arrow"><use href="#down" /></svg></span>
            <button class="tool"><svg><use href="#topo" /></svg></button>
            <button class="tool more dark"><svg><use href="#overlap" /></svg></button>
            <button class="tool"><svg><use href="#cross" /></svg></button>
            <button class="tool"><svg><use href="#trace" /></svg></button>
            <button class="drop"><svg><use href="#down" /></svg></button>
            <button class="tool"><svg><use href="#selfsnap" /></svg></button>
            <i class="grip"></i>
            <i class="grip"></i>
            <button class="tool"><svg><use href="#help" /></svg></button>
        </div>
        <div class="toolbar">
            <i class="grip"></i>
            <button class="tool"><svg><use href="#digit" /></svg></button>
            <button class="tool"><svg><use href="#target" /></svg></button>
            <i class="sep"></i>
            <button class="tool more dark"><svg><use href="#targetblue" /></svg></button>
            <button class="tool"><svg><use href="#addpart" /></svg></button>
            <button class="tool"><svg><use href="#polygon" /></svg></button>
            <button class="tool"><svg><use href="#move" /></svg></button>
            <i class="sep"></i>
            <button class="tool"><svg><use href="#info" /></svg></button>
            <button class="tool"><svg><use href="#wrench" /></svg></button>
        </div>

        <div class="work">
            <aside class="docks">
                <div class="dock-title">
                    <h2>ブラウザ</h2>
                    <button><svg><use href="#float" /></svg></button>
                    <button><svg><use href="#close" /></svg></button>
                </div>
                <div class="dock-tools">
                    <button><svg><use href="#addbox" /></svg></button>
                    <button><svg><use href="#refresh" /></svg></button>
                    <button><svg><use href="#filter" /></svg></button>
                    <button><svg><use href="#collapse" /></svg></button>
                    <button><svg><use href="#info" /></svg></button>
                </div>
                <div class="browser">
                    <ul class="tree">
                        <li class="parent"><svg><use href="#folder" /></svg>Z:¥ (Shared Folders)</li>
                        <li class="parent"><svg><use href="#gpkg" /></svg>GeoPackage</li>
                        <li><svg><use href="#feather" /></svg>SpatiaLite</li>
                        <li><svg><use href="#postgres" /></svg>PostgreSQL</li>
                        <li><svg><use href="#hana" /></svg>SAP HANA</li>
                        <li><svg><use href="#mssql" /></svg>MS SQL Server</li>
                        <li><svg><use href="#oracle" /></svg>Oracle</li>
                        <li><svg><use href="#globe" /></svg>WMS/WMTS</li>
                        <li class="parent"><svg><use href="#cube" /></svg>Scenes</li>
                        <li class="parent"><svg><use href="#grid" /></svg>Vector Tiles</li>
                        <li class="parent"><svg><use href="#xyz" /></svg>XYZ Tiles</li>
                        <li><svg><use href="#wcs" /></svg>WCS</li>
                        <li><svg><use href="#wfs" /></svg>WFS / OGC API - Features</li>
                        <li><svg><use href="#globe" /></svg>ArcGIS REST Servers</li>
                    </ul>
                    <div class="scrollbar">
                        <i class="up"></i>
                        <i class="thumb"></i>
                        <i class="track"></i>
                        <i class="end"></i>
                        <i class="down"></i>
                    </div>
                </div>
                <div class="dock-title second">
                    <h2>レイヤ</h2>
                    <button><svg><use href="#float" /></svg></button>
                    <button><svg><use href="#close" /></svg></button>
                </div>
                <div class="dock-tools">
                    <button><svg><use href="#brush" /></svg></button>
                    <button><svg><use href="#group" /></svg></button>
                    <button class="more dark"><svg><use href="#eye" /></svg></button>
                    <button class="more dark"><svg><use href="#filter" /></svg></button>
                    <button><svg><use href="#epsilon" /></svg></button>
                    <button class="drop"><svg><use href="#down" /></svg></button>
                    <button><svg><use href="#expand" /></svg></button>
                    <button class="ext last">»</button>
                </div>
                <div class="layers">
                    <div class="layer">
                        <svg class="open"><use href="#downdark" /></svg>
                        <input type="checkbox" id="osm2" checked>
                        <svg class="kind"><use href="#raster" /></svg>
                        <label for="osm2">OpenStreetMap</label>
                    </div>
                </div>
            </aside>
            <main class="canvas">
                <svg class="world" viewBox="0 0 549 549">
                    <rect width="549" height="549" fill="#aad3df" />
                    <!-- North America, Greenland -->
                    <g class="land" transform="translate(-14 -7.700) scale(.3333)">
                        <path d="M105 410L120 385 135 386 150 375 185 385 222 392 245 405 270 395 278 400 290 388 295 400 310 400 335 402 355 412 380 418 405 420 425 412 440 400 446 415 458 412 470 425 475 400 492 400 496 418 486 436 494 462 480 470 468 450 445 475 435 490 440 510 460 525 485 540 494 560 502 570 508 550 516 530 512 510 505 495 512 478 530 480 545 490 550 508 565 505 575 515 585 540 605 555 610 570 590 578 570 582 550 600 530 612 548 608 568 596 562 612 590 612 570 622 545 625 530 640 520 655 515 672 495 690 490 700 499 722 492 725 482 705 455 702 430 708 420 720 425 745 435 757 450 757 458 747 468 748 460 765 480 775 485 795 500 808 512 802 516 808 500 812 475 797 450 780 430 775 400 767 385 755 370 735 350 705 337 692 345 712 365 735 355 730 335 705 320 685 305 660 300 635 302 600 295 580 275 560 262 540 240 515 222 498 195 490 180 492 165 510 130 542 95 560 125 538 150 518 135 510 115 505 108 485 125 478 105 462 100 440 125 437z" />
                        <path d="M535 245L560 235 572 222 558 205 580 190 575 175 590 155 605 140 640 152 655 138 645 122 670 108 690 95 720 88 750 95 760 112 775 125 765 150 785 160 812 160 805 180 780 215 778 240 765 260 775 290 770 320 775 340 758 360 768 385 755 400 730 410 700 430 685 450 675 480 667 500 645 490 630 460 622 425 632 405 615 385 625 370 610 340 605 310 590 295 570 290 550 292 542 272 562 262z" />
                        <path d="M430 200L435 180 455 160 480 130 510 112 545 110 585 130 580 155 560 180 540 205 520 235 515 255 500 285 475 285 483 265 460 250 440 242 430 225z" />
                        <path d="M445 290L500 292 500 322 460 322 445 310zM460 340L500 338 520 345 545 370 560 395 582 430 575 445 562 440 573 478 555 475 520 450 512 440 535 432 515 400 490 385 465 385 455 365z" />
                        <path d="M325 355L340 348 365 355 385 345 388 370 404 395 385 405 360 410 335 395 320 375zM298 325L325 330 335 345 320 360 305 372 293 360zM385 228L405 235 430 250 420 260 395 250zM345 245L365 245 360 265 345 262zM305 290L335 265 330 290 315 300zM335 290L375 288 382 310 360 320 340 312zM400 285L415 288 415 310 398 308zM425 275L445 285 440 325 425 320zM402 340L425 335 420 370 402 365zM430 335L448 335 440 380 428 395z" />
                        <path d="M470 395L492 400 488 425 470 420zM480 445L494 465 475 465zM597 590L610 572 625 602zM757 440L775 443 800 438 803 455 785 468 765 460zM43 405L70 428 88 440 75 458 60 448 43 435z" />
                        <path d="M480 738L500 740 525 755 550 758 520 758 500 745zM150 750L155 756 152 758z" />
                        <g class="cut">
                            <path d="M450 185l30 10 30-15M470 230l30-20 35-5M490 130l20 20M455 165l30 5M655 118l20 25 10-10M690 100l-10 30M775 155l-35-15M590 160l30 10M780 245l-20 5M770 375l-30 5M555 205l20-5" />
                            <path d="M305 440l12-8 10 6-14 4zM335 490l18-12 4 6zM408 552l10 25M450 600l25-5 10 12M468 615v20M485 635l30-12M345 440l20 5M395 515l8 12M350 375l25 10M515 350l-15 30M530 450l30 10M250 410l30 10M340 405l30-5" />
                            <path stroke-dasharray="3 14" d="M300 425l60 20 60-10 20 40M340 470l50 20 20 40 10 40M410 470l20 50M520 550l60 5M325 370l60 15M475 350l60 50M600 170l20 30M760 280l-15 10" />
                        </g>
                        <path class="border" d="M222 392V498L245 515 262 545M302 588H435L450 598 475 605 490 632 525 618 550 600M337 690L360 692 380 695 410 712 420 725M445 778L460 765M470 785L485 783" />
                    </g>
                    <!-- Europe and Asia -->
                    <g class="land" transform="translate(256 -7.700) scale(.3333)">
                        <path d="M20 630L55 630 58 615 37 592 60 585 85 562 95 548 112 548 106 522 120 515 130 548 160 545 168 522 175 508 203 500 172 498 152 490 158 465 172 448 160 442 148 468 135 500 130 533 115 530 105 505 85 512 80 485 110 440 145 395 180 378 200 390 235 410 245 432 215 434 228 455 245 435 265 428 300 415 340 402 370 420 385 437 392 425 365 392 375 348 388 350 398 410 410 385 400 355 425 372 440 395 425 340 455 318 480 300 510 290 525 268 545 275 577 292 575 320 555 340 600 345 640 345 655 375 700 360 745 365 790 392 840 402 880 400 880 455 850 480 815 500 800 520 800 553 778 572 768 540 790 500 803 485 775 495 745 510 705 510 680 540 700 560 700 585 680 610 662 625 650 645 650 675 635 680 630 658 600 662 600 650 620 645 595 660 605 680 612 705 600 730 560 750 540 745 555 770 550 795 530 802 520 790 508 785 520 810 530 832 518 825 505 790 500 765 480 745 460 735 440 750 425 780 415 808 405 795 385 745 355 725 330 720 285 705 262 690 280 715 295 732 325 740 310 765 255 787 235 755 215 700 220 672 185 665 180 645 215 640 190 620 180 640 160 662 150 640 130 620 112 618 135 650 125 655 100 622 75 628 55 655 45 668 20 668z" />
                        <path d="M30 515L48 520 62 572 38 580 46 560 30 540zM12 548L28 545 25 570 10 572zM108 215L130 208 150 235 165 262 150 255 132 282 120 265zM145 200L178 200 178 220 155 225zM268 190L285 182 288 198 272 202zM308 175L322 168 325 178zM330 182L352 182 345 190zM312 192L328 188 322 204zM300 186l6 4-5 4zM370 278L340 300 320 345 315 380 298 378 300 345 320 308 345 285z" />
                        <path d="M478 180L497 175 503 200 515 225 500 238 482 215zM522 225L540 240 515 252zM685 300L718 296 720 315 690 320zM728 308L747 318 735 318zM700 335L712 342 705 345z" />
                        <path d="M703 642L705 670 680 680 658 692 655 684 685 670zM704 612L720 627 700 635zM706 548L710 580 714 606 707 602zM878 370L882 380 876 380z" />
                        <path d="M497 808L512 820 543 865 538 872 520 860zM542 873L600 880 620 888 580 886zM557 842L597 818 595 860 570 864zM605 762L615 770 612 780zM615 795L632 815 618 810zM604 855L625 850 610 865zM668 855L688 852 710 862 730 868 745 893 718 888 690 870 678 868zM606 730L612 728 608 742zM422 808L430 815 424 818zM558 755L568 752 562 760z" />
                        <path d="M120 645L135 652 130 662zM95 630L100 640 96 650z" />
                        <path fill="#aad3df" stroke="none" d="M272 612L295 600 298 612 288 620 302 645 304 660 282 662 280 640zM182 628L192 608 210 612 212 602 225 605 245 632 232 642 205 636 188 640z" />
                        <g class="cut">
                            <path d="M540 567l18-25M605 385l20-8M515 325l20-5M460 400l8 15M215 485l8 10M200 480l6 8M395 605h22M380 440l-10-12M575 320l-30 25" />
                        </g>
                        <path class="border" d="M110 518L118 450 150 405 180 392 195 400M180 392L195 430 215 465M172 510L185 525 180 540 200 560 235 580 232 600M85 555L95 590 120 585 160 590 200 600M60 585L90 600 85 625M120 550L130 580M155 550L165 590 200 600M100 610L150 600 165 625M270 600L275 580 335 570 340 550 380 542 410 555 450 580 480 575 545 580 600 590 610 562 640 565 670 600 665 620M450 580L470 605 520 630 560 632 600 605M450 580L430 605 380 640 330 628 300 630M400 650L410 680 460 715 500 710 520 740 545 745M335 665L340 715M300 660L340 668 390 650 400 650 370 690 380 715M255 640L275 650 265 690M220 690L245 668 260 680 285 705M255 770L300 755 312 740M460 715L470 740M500 715L515 770 545 775M640 650L665 625M705 855V885M390 640L420 605" />
                    </g>
                    <!-- southern continents -->
                    <g class="land" transform="translate(-14 232.300) scale(.37 .3333)">
                        <path d="M450 85L462 90 470 78 490 73 515 80 545 85 565 105 580 125 610 138 635 155 635 170 622 190 618 215 605 235 580 250 572 270 558 295 545 292 548 310 530 322 515 335 518 350 505 370 508 378 495 395 492 415 510 428 497 434 482 420 472 400 473 370 480 340 485 290 492 240 490 210 468 185 455 160 447 148 450 125 462 105z" />
                        <path d="M771 -45L820 -55 825 -35 865 -20 879 -30 924 -25 930 10 942 40 960 70 991 75 973 110 946 150 945 180 947 205 930 225 927 248 915 265 905 285 885 293 862 296 858 280 845 255 835 225 832 200 840 180 830 145 820 125 822 105 800 100 775 103 745 103 730 85 715 70 713 35 720 5 735 -20 755 -40z" />
                        <path d="M985 187L988 202 975 245 962 245 960 225 965 203zM1250 235L1258 225 1290 205 1310 190 1320 183 1340 185 1338 200 1355 215 1365 205 1368 180 1378 205 1385 220 1410 250 1413 275 1400 312 1380 317 1360 305 1350 290 1340 290 1320 278 1285 285 1258 297 1255 270zM1380 335L1392 335 1386 348zM1495 297L1517 315 1503 335 1500 318zM1500 335L1480 368 1468 362zM533 402L540 404 536 407zM1065 385L1070 388 1064 389z" />
                        <path d="M38 712L60 718 105 730 135 700 155 700 175 668 230 648 260 636 300 640 325 645 335 660 360 660 358 620 375 608 400 620 430 625 445 638 470 625 480 600 472 575 500 585 502 545 515 522 550 503 528 530 533 590 528 655 570 690 590 713 632 718 670 680 680 645 705 620 740 592 780 582 840 580 885 583 920 568 945 578 955 560 1005 533 1020 545 1065 555 1090 577 1135 542 1175 535 1180 525 1200 538 1240 535 1280 543 1340 535 1380 545 1410 562 1450 585 1483 605 1478 628 1455 655 1452 690 1462 713 1480 705 1524 710V960H38z" />
                        <path d="M38 538H1160" fill="none" stroke="#d5e6ea" stroke-width="3" stroke-dasharray="none" />
                        <path class="border" d="M490 80L485 105 515 120 530 105 565 110M455 130L480 120 485 150 475 170 492 180 520 185 545 205 555 245 545 270 560 290M500 230L535 230M492 240L500 300 490 350 485 400 505 430M510 90L520 120" />
                        <path class="border" d="M757 -40L740 -15 757 0 757 45 720 50M757 0L800 30 790 60 740 75M825 -35L828 10 800 30M885 -25V22L850 10 828 10M885 22H930M850 10L835 50 800 65M885 22L875 80 840 85 835 50M875 80L905 105 940 100 960 75M905 60L940 50M822 110L870 105 905 110 910 140 900 165 870 180 835 170M835 208L905 210 925 185 945 180M870 180L875 208 865 250 845 255M905 165L925 190M875 240L900 225 915 250M770 70L772 100M790 65L792 102M910 110L945 150" />
                        <path class="cut" d="M915 132l8-6M905 145l3 20M925 175l3 20" />
                    </g>
                </svg>
            </main>
        </div>

        <footer class="status">
            <span class="field find"><svg><use href="#search" /></svg><input type="text" value="> 博多駅" aria-label="検索"><svg class="clear"><use href="#clear" /></svg></span>
            <label class="coord-label" for="coord2">座標</label>
            <span class="field coord"><input type="text" id="coord2" value="8931148, -2329865"></span>
            <svg class="mouse"><use href="#mouse" /></svg>
            <label for="scale2">縮尺</label>
            <span class="field scale"><select id="scale2"><option>266842048</option></select><svg class="arrow line"><use href="#down" /></svg></span>
            <svg class="lock"><use href="#lock" /></svg>
            <label for="magnify">拡大</label>
            <span class="field number"><input type="text" id="magnify" value="100%"><svg class="spin"><use href="#spin" /></svg></span>
            <label class="rot" for="rotate">回転</label>
            <span class="field number"><input type="text" id="rotate" value="0.0 °"><svg class="spin"><use href="#spin" /></svg></span>
            <input type="checkbox" id="render" checked>
            <label for="render">レンダ</label>
            <button class="epsg"><svg><use href="#crs" /></svg>EPSG:3857</button>
            <button class="msg"><svg><use href="#bubble" /></svg></button>
        </footer>
    </section>

</body>

</html>
```
FILE: styles.css
```css
* {
    box-sizing: border-box;
}

body {
    margin: 0;
    padding: 57px 29px 53px 53px;
    display: grid;
    grid-template-columns: 455fr 108fr 955fr;
    background: #fff;
    color: #222;
    font-family: "Liberation Sans", "Noto Sans CJK JP", sans-serif;
    font-size: 10px;
    line-height: 16px;
    font-feature-settings: "palt";
}

h1,
h2,
ul {
    margin: 0;
    padding: 0;
    font-size: 10px;
    font-weight: normal;
    list-style: none;
}

button,
input,
select {
    margin: 0;
    padding: 0;
    border: 0;
    background: none;
    color: inherit;
    font: inherit;
    font-feature-settings: inherit;
}

.sprite {
    display: none;
}

/* window */

.window {
    display: flex;
    flex-direction: column;
    min-width: 0;
    height: calc(100vh - 112px);
    overflow: hidden;
    background: #f0f0f0;
}

.before {
    position: relative;
    border-bottom: 1px solid #777;
}

.after {
    margin-top: 2px;
    border: 1px solid #a5a5a5;
    border-width: 1px 2px 2px 1px;
}

.titlebar {
    display: flex;
    align-items: center;
    flex: none;
    height: 23px;
    padding-left: 5px;
    background: #eef3fa;
}

.after .titlebar {
    height: 25px;
    padding-left: 6px;
}

.titlebar h1 {
    flex: 1;
    margin-left: 4px;
    font-family: Roboto, "Noto Sans CJK JP", sans-serif;
    font-size: 11px;
}

.logo {
    width: 16px;
    height: 16px;
}

.winbtn {
    width: 44px;
    height: 24px;
}

.winbtn svg {
    width: 12px;
    height: 12px;
    fill: none;
    stroke: #222;
}

.menubar {
    display: flex;
    flex: none;
    gap: 10px;
    height: 18px;
    padding-left: 9px;
    background: #f1f4f8;
    white-space: nowrap;
}

.menubar button {
    flex: none;
}

/* toolbars */

.toolbar {
    display: flex;
    align-items: center;
    flex: none;
    height: 38px;
    border-bottom: 2px solid #d3d3d3;
    background: linear-gradient(#fafafa, #efefef);
}

.grip {
    flex: none;
    width: 12px;
    height: 18px;
    padding: 0 3px;
    background: radial-gradient(circle, #b5b5b5 1px, transparent 1px) 0 0 / 3px 3px;
    background-clip: content-box;
}

.tool + .grip {
    margin-left: 3px;
}

.sep {
    flex: none;
    width: 1px;
    height: 20px;
    margin: 0 3px 0 2px;
    background: #ddd;
}

.tool {
    display: flex;
    align-items: center;
    justify-content: center;
    flex: none;
    width: 32px;
    height: 30px;
    border-radius: 2px;
}

.tool svg {
    width: 22px;
    height: 22px;
}

.active {
    background: #dadada;
    border: 1px solid #b5b5b5;
}

.off {
    opacity: .4;
    filter: grayscale(1);
}

/* small menu mark in the lower right corner of a button */
.more {
    position: relative;
}

.more::after {
    content: "";
    position: absolute;
    right: 1px;
    bottom: 2px;
    border: 3px solid transparent;
    border-top-color: #aaa;
    border-bottom: 0;
}

.dark::after {
    border-top-color: #444;
}

.drop {
    flex: none;
    width: 12px;
}

.drop svg {
    display: block;
    width: 8px;
    height: 8px;
}

.ext {
    width: 14px;
    font-size: 14px;
    color: #444;
}

.rest {
    display: flex;
    align-items: center;
    flex: none;
    margin-left: auto;
}

.rest .grip {
    margin: 0 2px;
}

.field {
    display: flex;
    align-items: center;
    flex: none;
    height: 20px;
    border: 1px solid #bbb;
    border-radius: 2px;
    background: #fff;
}

.field input,
.field select {
    flex: 1;
    min-width: 0;
    height: 16px;
    appearance: none;
}

.spin {
    width: 15px;
    height: 16px;
    padding: 0 3px;
    border-left: 1px solid #ccc;
}

.arrow {
    width: 8px;
    height: 8px;
    margin-right: 7px;
}

.tolerance {
    width: 78px;
    margin-left: 1px;
    padding-left: 5px;
    background: #efefef;
    color: #888;
}

.unit {
    width: 77px;
    margin-left: 1px;
    padding-left: 4px;
    border-color: #ccc;
    background: #f6f6f6;
    color: #888;
}

/* docks */

.work {
    display: flex;
    flex: 1;
    min-height: 0;
}

.docks {
    display: flex;
    flex-direction: column;
    flex: none;
    width: 185px;
}

.dock-title {
    display: flex;
    align-items: center;
    flex: none;
    gap: 2px;
    height: 18px;
    padding: 0 2px 0 3px;
}

.second {
    margin-top: 8px;
}

.dock-title h2 {
    flex: 1;
}

.dock-title svg {
    display: block;
    width: 11px;
    height: 11px;
}

.dock-tools {
    display: flex;
    align-items: center;
    flex: none;
    height: 29px;
    padding-left: 3px;
}

.dock-tools button {
    width: 24px;
    height: 20px;
}

.dock-tools svg {
    display: block;
    width: 15px;
    height: 15px;
    margin: auto;
}

.dock-tools .drop {
    width: 12px;
}

.dock-tools .drop svg {
    width: 8px;
    height: 8px;
}

.dock-tools .last {
    width: 14px;
    margin-left: auto;
}

.browser {
    display: flex;
    flex: none;
    height: 241px;
    overflow: hidden;
    border-top: 1px solid #ddd;
    background: #fff;
}

.tree {
    display: grid;
    flex: 1;
    grid-auto-rows: 1fr;
    height: 245px;
    padding-top: 1px;
    white-space: nowrap;
}

.tree li {
    display: flex;
    align-items: center;
    padding-left: 19px;
}

.tree svg {
    flex: none;
    width: 16px;
    height: 16px;
    margin-right: 5px;
}

.tree .parent {
    padding-left: 6px;
}

.parent::before {
    content: "";
    margin-right: 9px;
    border: 4px solid transparent;
    border-left-color: #555;
    border-right: 0;
}

.scrollbar {
    display: flex;
    flex-direction: column;
    flex: none;
    width: 13px;
    border-left: 1px solid #ddd;
}

.up,
.down {
    height: 12px;
    background: #f3f3f3;
}

.up::before,
.down::before {
    content: "";
    display: block;
    width: 0;
    margin: 0 auto;
    border: 4px solid transparent;
}

.up::before {
    border-bottom-color: #666;
}

.down::before {
    margin-top: 4px;
    border-top-color: #666;
}

.thumb {
    height: 65px;
    background: #e6e6e6;
    border-bottom: 1px solid #ccc;
}

.track {
    flex: 1;
}

.end {
    height: 12px;
    background: #e3e3e3;
}

.layers {
    flex: 1;
    background: #fff;
}

.layer {
    display: flex;
    align-items: center;
    height: 18px;
    padding-left: 6px;
    background: #0f7fdc;
    color: #fff;
    text-decoration: underline;
}

.open {
    width: 8px;
    height: 8px;
    margin-right: 9px;
}

.kind {
    width: 13px;
    height: 13px;
    margin: 0 6px 0 8px;
}

input[type="checkbox"] {
    flex: none;
    width: 13px;
    height: 13px;
    appearance: none;
    background: #fff;
}

input[type="checkbox"]:checked::before {
    content: "";
    display: block;
    width: 11px;
    height: 11px;
    background: #111;
    clip-path: polygon(10% 50%, 28% 45%, 42% 68%, 75% 5%, 95% 5%, 50% 98%, 35% 98%);
}

.canvas {
    display: flex;
    align-items: center;
    justify-content: center;
    flex: 1;
    min-width: 0;
    margin-left: 6px;
    background: #fff;
    border-left: 1px solid #ddd;
}

.sea {
    background: #aad3df;
}

.world {
    width: 549px;
    max-width: 100%;
    max-height: 100%;
}

.land {
    fill: #f2efe9;
    stroke: #f2efe9;
    stroke-width: 4;
    stroke-dasharray: 7 5 3 6;
}

.cut {
    fill: none;
    stroke: #aad3df;
    stroke-width: 3;
    stroke-dasharray: none;
}

.border {
    fill: none;
    stroke: #dac4c8;
    stroke-width: 2;
    stroke-dasharray: none;
}

/* status bar */

.status {
    display: flex;
    align-items: center;
    flex: none;
    height: 27px;
    padding-left: 3px;
    border-top: 1px solid #ddd;
    white-space: nowrap;
}

.status label {
    flex: none;
}

.find {
    width: 193px;
    padding: 0 8px;
}

.find svg {
    width: 12px;
    height: 12px;
    margin-right: 8px;
}

.find .clear {
    margin: 0;
}

.find input::placeholder {
    color: #bbb;
    font-style: italic;
}

.coord-label {
    margin-left: 54px;
}

.after .coord-label {
    margin-left: 44px;
}

.coord {
    width: 101px;
    margin: 0 4px;
}

.after .coord {
    width: 111px;
}

.coord input {
    text-align: center;
}

.mouse {
    flex: none;
    width: 15px;
    height: 15px;
    margin-right: 14px;
}

.scale {
    width: 74px;
    margin-left: 3px;
    padding-left: 3px;
}

.scale .line {
    width: 18px;
    height: 18px;
    margin: 0;
    padding: 5px;
    border-left: 1px solid #ddd;
}

.lock {
    flex: none;
    width: 14px;
    height: 15px;
    margin: 0 8px 0 10px;
}

.number {
    width: 78px;
    margin-left: 4px;
    padding-left: 4px;
}

.rot {
    margin: 0 3px 0 9px;
}

.status input[type="checkbox"] {
    margin: 0 6px;
    border: 1px solid #ccc;
}

.epsg {
    display: flex;
    align-items: center;
    gap: 3px;
    margin-left: 14px;
}

.epsg svg {
    width: 14px;
    height: 14px;
}

.msg {
    margin-left: auto;
    margin-right: 28px;
}

.msg svg {
    display: block;
    width: 16px;
    height: 16px;
}

.next {
    align-self: start;
    width: 79px;
    margin: 376px auto 0 14px;
}

/* context menu over the window */

.popup {
    position: absolute;
    left: 137px;
    top: 234px;
    width: 307px;
    border: 1px solid #999;
    border-right: 2px solid #777;
    border-bottom: 2px solid #777;
    background: #fff;
}

.popup button {
    display: flex;
    align-items: center;
    width: 100%;
    height: 18px;
    padding-left: 26px;
    text-align: left;
    white-space: nowrap;
}

.popup .pic {
    height: 19px;
    padding-left: 5px;
}

.popup .pic svg {
    width: 15px;
    height: 15px;
    margin-right: 6px;
}

.popup .current {
    background: #0078d7;
    color: #fff;
}

.popup .sub::after {
    content: "";
    margin-left: auto;
    margin-right: 4px;
    border: 4px solid transparent;
    border-left-color: #555;
    border-right: 0;
}

.popup hr {
    height: 1px;
    margin: 1px 5px 1px 3px;
    border: 0;
    background: #dcdcdc;
}
```
